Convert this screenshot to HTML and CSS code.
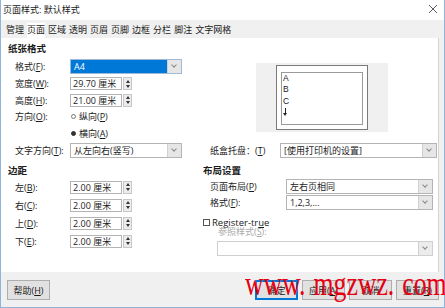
FILE: index.html
```html
<!DOCTYPE html>
<html lang="zh-CN">
<head>
  <meta charset="UTF-8" />
  <title>页面样式: 默认样式</title>
  <link rel="stylesheet" href="styles.css">
</head>
<body>
  <div class="dialog">
    <div class="titlebar">
      <span>页面样式: 默认样式</span>
      <svg class="close" viewBox="0 0 10 10" width="10" height="10">
        <path d="M1 1L9 9M9 1L1 9" stroke="#333" stroke-width="0.8" fill="none"/>
      </svg>
    </div>

    <div class="tabs">
      <span class="tab">管理</span>
      <span class="tab active">页面</span>
      <span class="tab">区域</span>
      <span class="tab">透明</span>
      <span class="tab">页眉</span>
      <span class="tab">页脚</span>
      <span class="tab">边框</span>
      <span class="tab">分栏</span>
      <span class="tab">脚注</span>
      <span class="tab">文字网格</span>
    </div>

    <div class="panel">
      <div class="top">
        <div class="paper">
          <div class="heading">纸张格式</div>
          <div class="rows">
            <div class="row">
              <label>格式(<u>F</u>):</label>
              <div class="select picked"><span class="val">A4</span><span class="arrow"></span></div>
            </div>
            <div class="row">
              <label>宽度(<u>W</u>):</label>
              <div class="spin"><span class="box">29.70 厘米</span><span class="btns"></span></div>
            </div>
            <div class="row">
              <label>高度(<u>H</u>):</label>
              <div class="spin"><span class="box">21.00 厘米</span><span class="btns"></span></div>
            </div>
            <div class="row">
              <label>方向(<u>O</u>):</label>
              <span class="radio"></span><span>纵向(<u>P</u>)</span>
            </div>
            <div class="row">
              <label></label>
              <span class="radio on"></span><span>横向(<u>A</u>)</span>
            </div>
          </div>
        </div>

        <div class="preview-wrap">
          <div class="preview">
            <div class="page">
              <div class="page-inner">A<br>B<br>C<br><span class="down"></span></div>
            </div>
          </div>
        </div>

        <div class="row">
          <label>文字方向(<u>T</u>):</label>
          <div class="select"><span class="val">从左向右(竖写)</span><span class="arrow"></span></div>
        </div>
        <div class="row">
          <label class="tray-label">纸盒托盘：(<u>T</u>)</label>
          <div class="select tray"><span class="val">[使用打印机的设置]</span><span class="arrow"></span></div>
        </div>
      </div>

      <div class="bottom">
        <div class="margins">
          <div class="heading">边距</div>
          <div class="row tall">
            <label>左(<u>B</u>):</label>
            <div class="spin"><span class="box">2.00 厘米</span><span class="btns"></span></div>
          </div>
          <div class="row tall">
            <label>右(<u>C</u>):</label>
            <div class="spin"><span class="box">2.00 厘米</span><span class="btns"></span></div>
          </div>
          <div class="row tall">
            <label>上(<u>D</u>):</label>
            <div class="spin"><span class="box">2.00 厘米</span><span class="btns"></span></div>
          </div>
          <div class="row tall">
            <label>下(<u>E</u>):</label>
            <div class="spin"><span class="box">2.00 厘米</span><span class="btns"></span></div>
          </div>
        </div>

        <div class="layout">
          <div class="heading">布局设置</div>
          <div class="row layout-row">
            <label class="layout-label">页面布局(<u>P</u>)</label>
            <div class="select layout-sel"><span class="val">左右页相同</span><span class="arrow"></span></div>
          </div>
          <div class="row layout-row">
            <label class="layout-label">格式(<u>F</u>):</label>
            <div class="select layout-sel"><span class="val">1,2,3,...</span><span class="arrow"></span></div>
          </div>
          <div class="check-row"><span class="check"></span>Register-tr<u>u</u>e</div>
          <div class="ref-label">参照样式(<u>S</u>):</div>
          <div class="select disabled"><span class="val"></span><span class="arrow"></span></div>
        </div>
      </div>
    </div>

    <div class="footer">
      <button class="btn">帮助(<u>H</u>)</button>
      <div class="btn-group">
        <button class="btn default">确定</button>
        <button class="btn">应用(<u>A</u>)</button>
        <button class="btn">取消</button>
        <button class="btn">重置(<u>R</u>)</button>
      </div>
    </div>

    <div class="watermark">www. mgzwz. com</div>
  </div>
</body>
</html>
```

FILE: styles.css
```css
body {
  margin: 0;
  width: 445px;
  height: 308px;
  overflow: hidden;
  font-family: "Open Sans", "Noto Sans CJK SC", sans-serif;
  font-size: 9px;
  color: #1a1a1a;
  background: #fff;
}

u {
  text-decoration-thickness: 1px;
  text-underline-offset: 1px;
}

.dialog {
  position: relative;
  box-sizing: border-box;
  width: 445px;
  height: 308px;
  border: 1px solid #8fb4da;
  border-top: none;
  display: flex;
  flex-direction: column;
  background: #f0f0f0;
}

.titlebar {
  height: 20px;
  background: #fff;
  display: flex;
  align-items: center;
  justify-content: space-between;
  padding: 0 6px 0 2px;
  line-height: 12px;
}

.close {
  margin-top: -2px;
}

.tabs {
  height: 18px;
  display: flex;
  align-items: flex-end;
  gap: 3px;
  padding-left: 5px;
}

.tab {
  line-height: 14px;
  padding-bottom: 1px;
}

.tab.active {
  background: #fff;
}

.panel {
  height: 234px;
  box-sizing: border-box;
  margin-right: 5px;
  background: #fff;
  border-right: 1px solid #d4d4d4;
  padding: 4px 0 0 7px;
}

.heading {
  font-weight: 700;
  height: 14px;
  line-height: 14px;
  font-size: 9.5px;
}

.top {
  display: grid;
  grid-template-columns: 195px 1fr;
  grid-template-rows: auto 16.7px;
}

.rows {
  margin-top: 2.5px;
}

.row {
  display: flex;
  align-items: center;
  height: 16.7px;
}

.row label {
  flex-shrink: 0;
  box-sizing: border-box;
  width: 62px;
  padding-left: 7px;
  white-space: nowrap;
}

.row.tall {
  height: 18px;
}

.row .tray-label {
  width: 77px;
}

.row .layout-label {
  width: 83px;
}

.select {
  box-sizing: border-box;
  display: flex;
  height: 15px;
  width: 112px;
  border: 1px solid #b4b4b4;
  background: #fff;
}

.select .val {
  flex: 1;
  line-height: 13px;
  padding-left: 3px;
  white-space: nowrap;
}

.select .arrow {
  width: 13px;
  background: #e6e6e6;
  border-left: 1px solid #d0d0d0;
  position: relative;
}

.select .arrow::after {
  content: "";
  position: absolute;
  left: 4px;
  top: 3px;
  width: 3px;
  height: 3px;
  border-right: 1px solid #888;
  border-bottom: 1px solid #888;
  transform: rotate(45deg);
}

.select.picked .val {
  background: #0078d7;
  color: #fff;
}

.select.picked {
  border-color: #9fb9d8;
}

.select.tray {
  width: 157px;
}

.select.layout-sel {
  width: 147px;
}

.spin {
  display: flex;
  gap: 1px;
  height: 13px;
}

.spin .box {
  box-sizing: border-box;
  width: 52px;
  border: 1px solid #b4b4b4;
  line-height: 11px;
  padding-left: 2px;
  white-space: nowrap;
}

.spin .btns {
  box-sizing: border-box;
  width: 9px;
  border: 1px solid #c8c8c8;
  background: #ececec;
  position: relative;
}

.spin .btns::before,
.spin .btns::after {
  content: "";
  position: absolute;
  left: 1.5px;
  border-left: 2.5px solid transparent;
  border-right: 2.5px solid transparent;
}

.spin .btns::before {
  top: 1.5px;
  border-bottom: 3px solid #333;
}

.spin .btns::after {
  bottom: 1.5px;
  border-top: 3px solid #333;
}

.radio {
  box-sizing: border-box;
  width: 5px;
  height: 5px;
  border: 1px solid #777;
  border-radius: 50%;
  margin: 0 3px 0 1px;
}

.radio.on {
  background: #333;
  border-color: #333;
}

.preview-wrap {
  padding: 21px 0 0 53px;
}

.preview {
  width: 132px;
  height: 69px;
  background: #f0f0f0;
  display: flex;
  justify-content: center;
  align-items: flex-start;
  padding-top: 2px;
  box-sizing: border-box;
}

.page {
  box-sizing: border-box;
  width: 92px;
  height: 65px;
  background: #fff;
  border: 1px solid #7a7a7a;
  padding: 6px 4px 4px 4px;
}

.page-inner {
  box-sizing: border-box;
  height: 100%;
  border: 1px solid #9a9a9a;
  padding: 0 0 0 1px;
  line-height: 11.3px;
  font-family: "Liberation Sans", sans-serif;
  font-size: 8.5px;
  color: #222;
}

.down {
  display: inline-block;
  position: relative;
  width: 5px;
  height: 8px;
  vertical-align: -1px;
}

.down::before {
  content: "";
  position: absolute;
  left: 2px;
  top: 0;
  width: 1px;
  height: 6px;
  background: #222;
}

.down::after {
  content: "";
  position: absolute;
  left: 0;
  bottom: 0;
  border-left: 2.5px solid transparent;
  border-right: 2.5px solid transparent;
  border-top: 3px solid #222;
}

.bottom {
  display: grid;
  grid-template-columns: 195px 1fr;
  margin-top: 5.5px;
}

.layout-row {
  height: 16.5px;
}

.check-row {
  display: flex;
  align-items: center;
  height: 16px;
  margin-top: 3px;
  font-size: 9.5px;
}

.check {
  box-sizing: border-box;
  width: 7px;
  height: 7px;
  border: 1px solid #555;
  margin-right: 2px;
}

.ref-label {
  color: #a8a8a8;
  padding-left: 15px;
  line-height: 10px;
  margin-top: -3px;
}

.select.disabled {
  width: 216px;
  margin: 4px 0 0 14px;
  border-color: #cfcfcf;
}

.select.disabled .arrow {
  background: #ececec;
}

.footer {
  flex: 1;
  display: flex;
  justify-content: space-between;
  align-items: flex-start;
  padding: 8px 5px 0 6px;
}

.btn-group {
  display: flex;
  gap: 4px;
}

.btn {
  box-sizing: border-box;
  height: 20px;
  width: 43px;
  font-family: inherit;
  font-size: 9px;
  color: #1a1a1a;
  background: #e1e1e1;
  border: 1px solid #adadad;
  padding: 0;
}

.btn.default {
  border: 1px solid #0078d7;
  box-shadow: inset 0 0 0 1px #0078d7;
}

.watermark {
  position: absolute;
  left: 244px;
  top: 266px;
  font-family: "Liberation Serif", serif;
  font-size: 33px;
  color: #e60012;
  white-space: nowrap;
  transform: scaleX(0.78);
  transform-origin: left top;
  word-spacing: 2px;
}
```
